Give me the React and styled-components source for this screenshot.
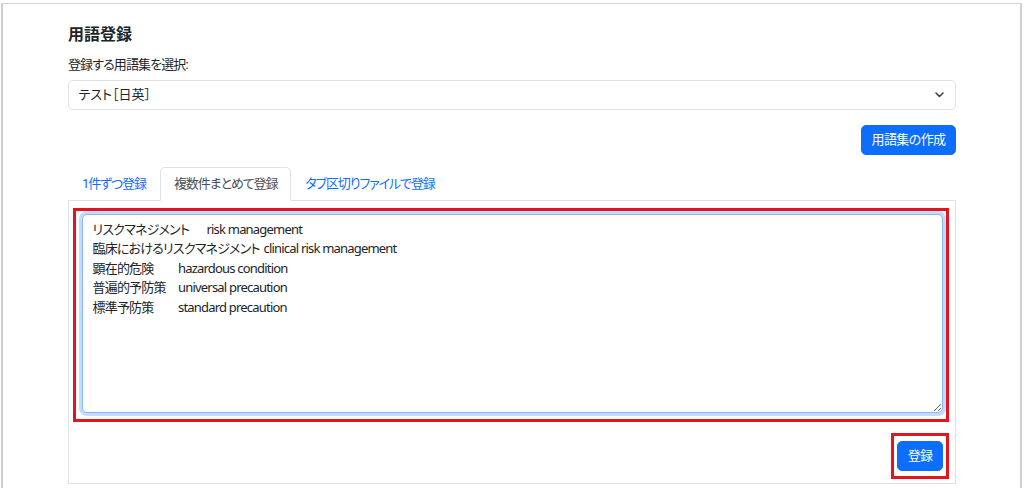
import React from 'react';
import styled, { createGlobalStyle } from 'styled-components';

const GlobalStyle = createGlobalStyle`
  html, body {
    margin: 0;
    padding: 0;
    background: #fff;
  }
  body {
    font-family: Roboto, "Noto Sans CJK JP", sans-serif;
    font-size: 13px;
    line-height: 1.5;
    color: #212529;
    font-feature-settings: "palt";
    letter-spacing: -0.9px;
  }
  * { box-sizing: border-box; }
`;

const Frame = styled.div`
  width: 1021px;
  height: 485px;
  margin: 3px 0 0 1px;
  border-left: 2px solid #cfcfcf;
  border-right: 2px solid #cfcfcf;
  border-top: 1px solid #d2d2d2;
`;

const Container = styled.div`
  width: 888px;
  margin-left: 65px;
  padding-top: 20px;
`;

const Title = styled.h2`
  margin: 1px 0 11px;
  font-size: 16px;
  line-height: 1.2;
  font-weight: 700;
  letter-spacing: 0;
  color: #212529;
`;

const Label = styled.label`
  display: block;
  margin-bottom: 5px;
`;

const SelectWrap = styled.div`
  position: relative;
  height: 30px;
`;

const Select = styled.select`
  appearance: none;
  width: 100%;
  height: 30px;
  padding: 0 36px 0 9.5px;
  font: inherit;
  font-feature-settings: "palt";
  letter-spacing: 0;
  color: #212529;
  background: #fff;
  border: 1px solid #dee2e6;
  border-radius: 5px;
  outline: none;
`;

const Chevron = styled.svg`
  position: absolute;
  right: 12px;
  top: 12px;
  width: 9px;
  height: 6px;
  pointer-events: none;
`;

const ActionRow = styled.div`
  display: flex;
  justify-content: flex-end;
  margin: 15px 0 12px;
`;

const Button = styled.button`
  height: 30px;
  padding: 0 9.5px;
  font: inherit;
  font-feature-settings: "palt";
  letter-spacing: -0.6px;
  color: #fff;
  background: #0d6efd;
  border: 1px solid #0d6efd;
  border-radius: 5px;
  cursor: pointer;
`;

const Tabs = styled.ul`
  display: flex;
  margin: 0;
  padding: 0;
  list-style: none;
  border-bottom: 1px solid #dee2e6;
`;

const Tab = styled.li`
  margin-bottom: -1px;
  padding: 6.5px 13px;
  border: 1px solid ${p => (p.$active ? '#dee2e6' : 'transparent')};
  border-bottom-color: ${p => (p.$active ? '#fff' : 'transparent')};
  border-top-left-radius: 5px;
  border-top-right-radius: 5px;
  background: ${p => (p.$active ? '#fff' : 'transparent')};
  color: ${p => (p.$active ? '#495057' : '#0d6efd')};
  letter-spacing: -1.1px;
  cursor: pointer;
`;

const Panel = styled.div`
  height: 283px;
  padding: 7px 6px 4px 4px;
  border: 1px solid #dee2e6;
  border-top: none;
`;

const Highlight = styled.div`
  border: 3px solid #e3141d;
  padding: ${p => p.$pad};
`;

const TextArea = styled.textarea`
  display: block;
  width: 100%;
  height: 199px;
  padding: 4.5px 9.5px;
  font-family: "Noto Sans", "Noto Sans CJK JP", sans-serif;
  font-size: 13px;
  font-feature-settings: "palt";
  letter-spacing: -0.8px;
  line-height: 1.5;
  color: #212529;
  tab-size: 28.5px;
  border: 1px solid #86b7fe;
  border-radius: 5px;
  box-shadow: 0 0 0 3px rgba(13, 110, 253, 0.25);
  outline: none;
  resize: vertical;
`;

const SubmitRow = styled.div`
  display: flex;
  justify-content: flex-end;
  margin-top: 11px;
`;

const terms = [
  'リスクマネジメント\trisk management',
  '臨床におけるリスクマネジメント\tclinical risk management',
  '顕在的危険\thazardous condition',
  '普遍的予防策\tuniversal precaution',
  '標準予防策\tstandard precaution',
].join('\n');

const tabs = ['1件ずつ登録', '複数件まとめて登録', 'タブ区切りファイルで登録'];

export default function App() {
  return (
    <>
      <GlobalStyle />
      <Frame>
        <Container>
          <Title>用語登録</Title>
          <Label htmlFor="glossary">登録する用語集を選択:</Label>
          <SelectWrap>
            <Select id="glossary" defaultValue="test">
              <option value="test">テスト［日英］</option>
            </Select>
            <Chevron viewBox="0 0 9 6">
              <path d="M1 1l3.5 3.5L8 1" fill="none" stroke="#343a40" strokeWidth="1.5" strokeLinecap="round" strokeLinejoin="round" />
            </Chevron>
          </SelectWrap>
          <ActionRow>
            <Button>用語集の作成</Button>
          </ActionRow>
          <Tabs>
            {tabs.map((t, i) => (
              <Tab key={t} $active={i === 1}>{t}</Tab>
            ))}
          </Tabs>
          <Panel>
            <Highlight $pad="3px 3px 6px 6px">
              <TextArea defaultValue={terms} spellCheck={false} />
            </Highlight>
            <SubmitRow>
              <Highlight $pad="5px 3px">
                <Button>登録</Button>
              </Highlight>
            </SubmitRow>
          </Panel>
        </Container>
      </Frame>
    </>
  );
}
